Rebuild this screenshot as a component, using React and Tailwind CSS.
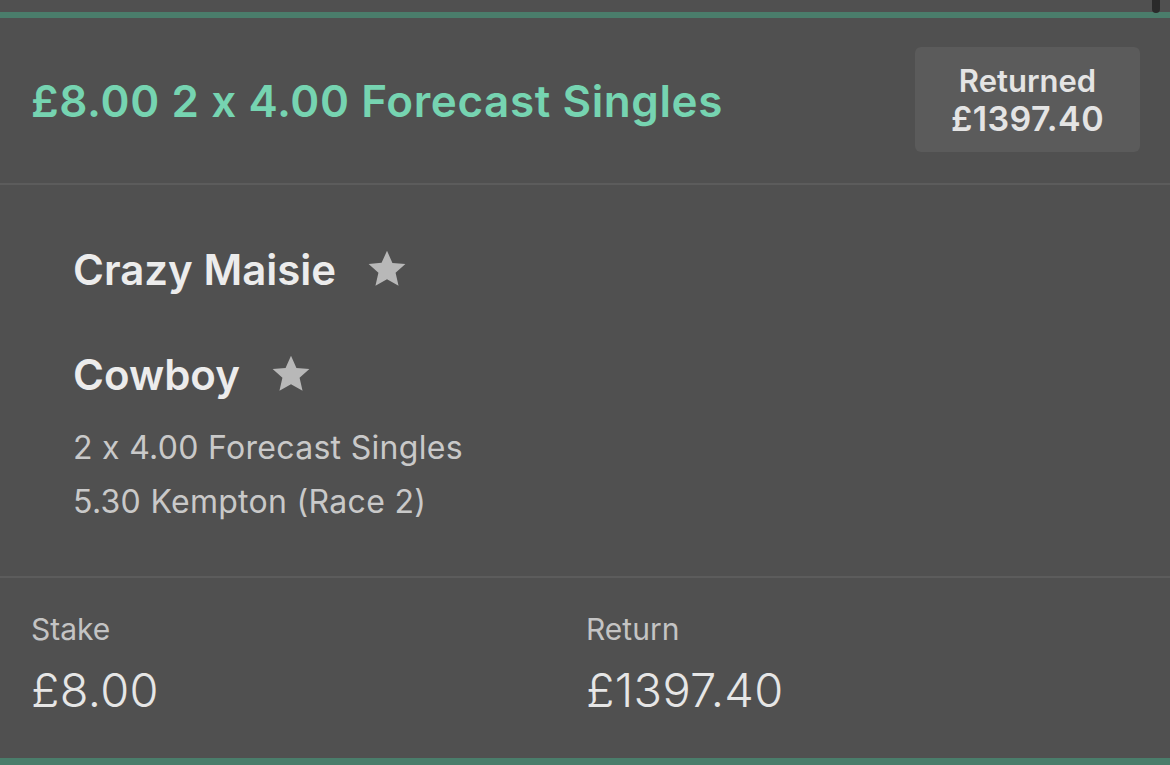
const Star = ({ className }) => (
  <svg viewBox="0 0 24 24" className={className} fill="currentColor">
    <path d="M12 1.6l3.1 6.9 7.4.7-5.6 5 1.7 7.4L12 17.8l-6.6 3.8 1.7-7.4-5.6-5 7.4-.7z" />
  </svg>
);

export default function App() {
  const runners = ['Crazy Maisie', 'Cowboy'];

  return (
    <div className="w-[1170px] h-[765px] overflow-hidden bg-[#505050] flex flex-col relative" style={{ fontFamily: 'Inter, "Noto Sans", sans-serif' }}>
      {/* scroll indicator */}
      <div className="absolute right-[10px] top-0 w-[8px] h-[13px] rounded-b bg-[#2a2a2a]" />

      <div className="h-[12px] shrink-0" />
      <div className="h-[6px] shrink-0 bg-[#4a7d6b]" />

      {/* Header */}
      <div className="h-[165px] shrink-0 flex items-center justify-between pl-[31px] pr-[30px]">
        <h1 className="text-[44px] font-semibold text-[#76d4b1] tracking-[0.6px]">£8.00 2 x 4.00 Forecast Singles</h1>
        <div className="w-[225px] h-[105px] rounded-[6px] bg-[#5b5b5b] flex flex-col items-center justify-center text-[#e4e4e4] font-semibold leading-[38px] mt-[-2px]">
          <span className="text-[31px]">Returned</span>
          <span className="text-[34px] tracking-[0.4px]">£1397.40</span>
        </div>
      </div>
      <div className="h-[2px] shrink-0 bg-[#5c5c5c]" />

      {/* Selections */}
      <div className="h-[391px] shrink-0 pl-[73px] pt-[59px]">
        {runners.map((name, i) => (
          <div key={name} className={`flex items-center gap-[30px] h-[50px] ${i > 0 ? 'mt-[55px]' : ''}`}>
            <span className="text-[42px] font-semibold text-[#ececec]">{name}</span>
            <Star className="w-[42px] h-[42px] text-[#b8b8b8]" />
          </div>
        ))}
        <div className="mt-[22px] text-[32px] leading-[54px] text-[#c9c9c9] tracking-[0.3px]">
          <div>2 x 4.00 Forecast Singles</div>
          <div>5.30 Kempton (Race 2)</div>
        </div>
      </div>
      <div className="h-[2px] shrink-0 bg-[#5c5c5c]" />

      {/* Stake / Return */}
      <div className="h-[180px] shrink-0 grid grid-cols-[555px_1fr] pl-[31px] pt-[32px]">
        {[['Stake', '£8.00'], ['Return', '£1397.40']].map(([label, value]) => (
          <div key={label} className="flex flex-col">
            <span className="text-[30px] text-[#c4c4c4] leading-[38px]">{label}</span>
            <span className="text-[47px] font-light text-[#e6e6e6] leading-[56px] mt-[14px] tracking-[0.3px]">{value}</span>
          </div>
        ))}
      </div>
      <div className="flex-1 bg-[#4a7d6b]" />
    </div>
  );
}
